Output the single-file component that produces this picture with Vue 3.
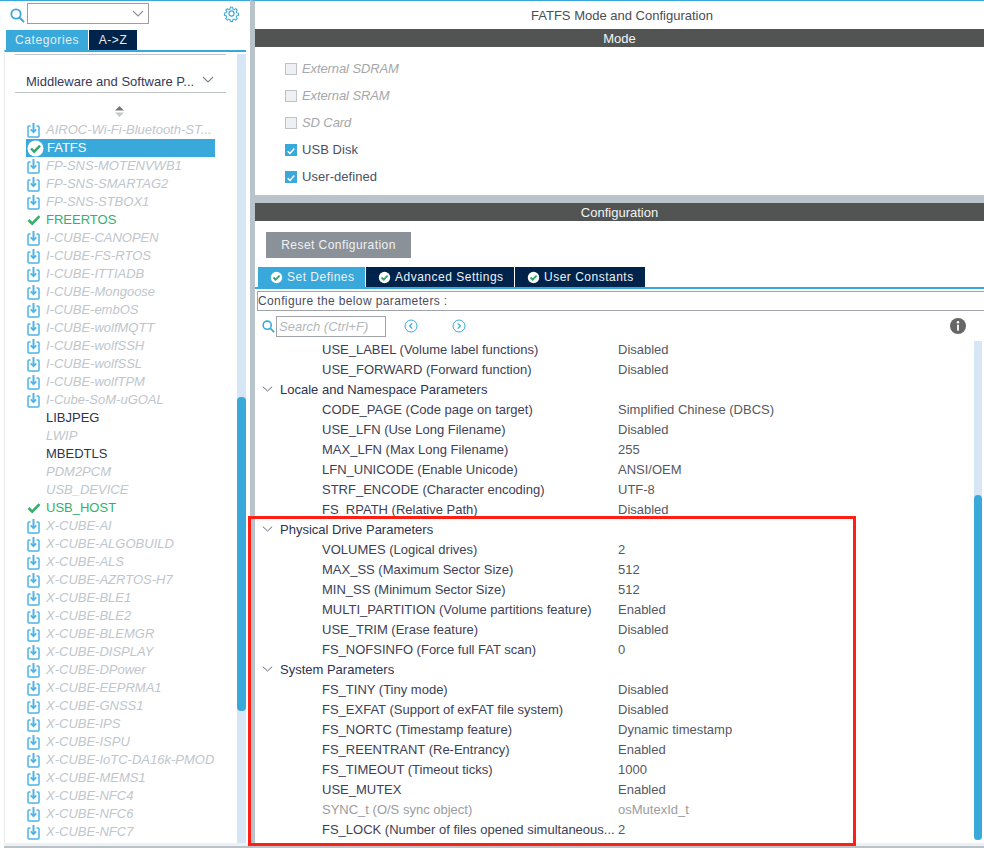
<script setup>
const dl = 'dl', ok = 'ok', sel = 'sel', on = 'on', off = 'off'
const mw = [
  ['AIROC-Wi-Fi-Bluetooth-ST...', dl], ['FATFS', sel], ['FP-SNS-MOTENVWB1', dl], ['FP-SNS-SMARTAG2', dl],
  ['FP-SNS-STBOX1', dl], ['FREERTOS', ok], ['I-CUBE-CANOPEN', dl], ['I-CUBE-FS-RTOS', dl], ['I-CUBE-ITTIADB', dl],
  ['I-CUBE-Mongoose', dl], ['I-CUBE-embOS', dl], ['I-CUBE-wolfMQTT', dl], ['I-CUBE-wolfSSH', dl], ['I-CUBE-wolfSSL', dl],
  ['I-CUBE-wolfTPM', dl], ['I-Cube-SoM-uGOAL', dl], ['LIBJPEG', on], ['LWIP', off], ['MBEDTLS', on], ['PDM2PCM', off],
  ['USB_DEVICE', off], ['USB_HOST', ok], ['X-CUBE-AI', dl], ['X-CUBE-ALGOBUILD', dl], ['X-CUBE-ALS', dl],
  ['X-CUBE-AZRTOS-H7', dl], ['X-CUBE-BLE1', dl], ['X-CUBE-BLE2', dl], ['X-CUBE-BLEMGR', dl], ['X-CUBE-DISPLAY', dl],
  ['X-CUBE-DPower', dl], ['X-CUBE-EEPRMA1', dl], ['X-CUBE-GNSS1', dl], ['X-CUBE-IPS', dl], ['X-CUBE-ISPU', dl],
  ['X-CUBE-IoTC-DA16k-PMOD', dl], ['X-CUBE-MEMS1', dl], ['X-CUBE-NFC4', dl], ['X-CUBE-NFC6', dl], ['X-CUBE-NFC7', dl], ['', dl]
]
const modes = [
  ['External SDRAM', false], ['External SRAM', false], ['SD Card', false], ['USB Disk', true], ['User-defined', true]
]
const params = [
  ['USE_LABEL (Volume label functions)', 'Disabled'], ['USE_FORWARD (Forward function)', 'Disabled'],
  ['Locale and Namespace Parameters'],
  ['CODE_PAGE (Code page on target)', 'Simplified Chinese (DBCS)'], ['USE_LFN (Use Long Filename)', 'Disabled'],
  ['MAX_LFN (Max Long Filename)', '255'], ['LFN_UNICODE (Enable Unicode)', 'ANSI/OEM'],
  ['STRF_ENCODE (Character encoding)', 'UTF-8'], ['FS_RPATH (Relative Path)', 'Disabled'],
  ['Physical Drive Parameters'],
  ['VOLUMES (Logical drives)', '2'], ['MAX_SS (Maximum Sector Size)', '512'], ['MIN_SS (Minimum Sector Size)', '512'],
  ['MULTI_PARTITION (Volume partitions feature)', 'Enabled'], ['USE_TRIM (Erase feature)', 'Disabled'],
  ['FS_NOFSINFO (Force full FAT scan)', '0'],
  ['System Parameters'],
  ['FS_TINY (Tiny mode)', 'Disabled'], ['FS_EXFAT (Support of exFAT file system)', 'Disabled'],
  ['FS_NORTC (Timestamp feature)', 'Dynamic timestamp'], ['FS_REENTRANT (Re-Entrancy)', 'Enabled'],
  ['FS_TIMEOUT (Timeout ticks)', '1000'], ['USE_MUTEX', 'Enabled'],
  ['SYNC_t (O/S sync object)', 'osMutexId_t', true],
  ['FS_LOCK (Number of files opened simultaneous...', '2']
]
const tabs = ['Set Defines', 'Advanced Settings', 'User Constants']
</script>

<template>
  <div class="app">
    <aside class="left">
      <div class="search-row">
        <svg class="lens" width="15" height="15" viewBox="0 0 15 15"><circle cx="6" cy="6" r="4.7" fill="none" stroke="#39a9dc" stroke-width="1.8"/><path d="M9.6 9.6L14 14" stroke="#39a9dc" stroke-width="2"/></svg>
        <div class="combo"><svg width="12" height="7" viewBox="0 0 12 7"><path d="M1 1l5 5 5-5" fill="none" stroke="#8a9299" stroke-width="1.1"/></svg></div>
        <svg class="gear" width="17" height="17" viewBox="0 0 24 24" fill="none" stroke="#39a9dc" stroke-width="1.7"><circle cx="12" cy="12" r="3.6"/><path d="M10.2 1.6h3.6l.6 3 2 .9 2.6-1.7 2.5 2.6-1.7 2.5.9 2.1 3 .6v3.6l-3 .6-.9 2 1.7 2.6-2.6 2.5-2.5-1.7-2.1.9-.6 3h-3.6l-.6-3-2-.9-2.6 1.7-2.5-2.6 1.7-2.5-.9-2.1-3-.6v-3.600l3-.6.9-2-1.700-2.600 2.600-2.500 2.500 1.700 2.100-.9z" transform="translate(1.800 1.800) scale(.85)"/></svg>
      </div>
      <div class="ltabs"><span class="ltab active">Categories</span><span class="ltab">A-&gt;Z</span></div>
      <div class="lbody">
        <div class="lcontent">
          <div class="dropdown"><span>Middleware and Software P...</span><svg width="12" height="7" viewBox="0 0 12 7"><path d="M1 1l5 5 5-5" fill="none" stroke="#7d868d" stroke-width="1.1"/></svg></div>
          <div class="sorter"><svg width="9" height="11" viewBox="0 0 9 11"><path d="M4.500 0L9 4.500H0z" fill="#777"/><path d="M4.500 11L0 6.500h9z" fill="#c4c8cb"/></svg></div>
          <div class="list">
            <div v-for="(it, i) in mw" :key="i" class="item" :class="it[1]">
              <span class="ico">
                <svg v-if="it[1] === 'dl'" width="13" height="15" viewBox="0 0 13 15" fill="none" stroke="#4fb3e5"><path d="M3.500 3H2Q1 3 1 4v9q0 1 1 1h9q1 0 1-1V4q0-1-1-1H9.500" stroke-width="1.500"/><path d="M6.500 0v8.500" stroke-width="2"/><path d="M3.700 6.300L6.500 9.200l2.800-2.900" stroke-width="1.700"/></svg>
                <svg v-else-if="it[1] === 'ok'" width="14" height="12" viewBox="0 0 14 12"><path d="M1.500 6l3.700 3.700 7.300-7.500" fill="none" stroke="#34b06e" stroke-width="2.600"/></svg>
                <svg v-else-if="it[1] === 'sel'" width="17" height="17" viewBox="0 0 17 17"><circle cx="8.500" cy="8.500" r="8" fill="#fff"/><path d="M4 8.500l3.200 3.200 5.800-6" fill="none" stroke="#34a56b" stroke-width="2.400"/></svg>
              </span>
              <span class="lbl">{{ it[0] }}</span>
            </div>
          </div>
        </div>
        <div class="ltrack"><div class="lthumb"></div></div>
      </div>
      <div class="lfoot"></div>
    </aside>

    <main class="right">
      <div class="title">FATFS Mode and Configuration</div>
      <div class="bar">Mode</div>
      <section class="modes">
        <label v-for="m in modes" :key="m[0]" class="mode" :class="{ checked: m[1] }">
          <span class="box"><svg v-if="m[1]" width="12" height="12" viewBox="0 0 12 12"><path d="M2 6.200l2.800 2.800L10 3" fill="none" stroke="#fff" stroke-width="1.800"/></svg></span>
          {{ m[0] }}
        </label>
      </section>
      <div class="bar cfg">Configuration</div>
      <section class="config">
        <div class="reset-row"><button class="reset">Reset Configuration</button></div>
        <div class="tabs">
          <span v-for="(t, i) in tabs" :key="t" class="tab" :class="{ active: i === 0 }">
            <svg width="13" height="13" viewBox="0 0 13 13"><circle cx="6.500" cy="6.500" r="5.700" fill="#fff"/><path d="M3.500 6.500l2.200 2.200 3.900-4" fill="none" stroke="#34a56b" stroke-width="1.800"/></svg>
            {{ t }}
          </span>
        </div>
        <div class="desc">Configure the below parameters :</div>
        <div class="tools">
          <svg class="slens" width="13" height="13" viewBox="0 0 15 15"><circle cx="6" cy="6" r="4.700" fill="none" stroke="#39a9dc" stroke-width="1.800"/><path d="M9.600 9.600L14 14" stroke="#39a9dc" stroke-width="2"/></svg>
          <div class="sbox">Search (Ctrl+F)</div>
          <svg class="nav first" width="14" height="14" viewBox="0 0 14 14" fill="none" stroke="#39a9dc"><circle cx="7" cy="7" r="6"/><path d="M8.300 4.300L5.600 7l2.700 2.700" stroke-width="1.200"/></svg>
          <svg class="nav" width="14" height="14" viewBox="0 0 14 14" fill="none" stroke="#39a9dc"><circle cx="7" cy="7" r="6"/><path d="M5.700 4.300L8.400 7l-2.700 2.700" stroke-width="1.200"/></svg>
          <svg class="info" width="16" height="16" viewBox="0 0 16 16"><circle cx="8" cy="8" r="8" fill="#666"/><circle cx="8" cy="4.200" r="1.200" fill="#fff"/><rect x="7.100" y="6.700" width="1.800" height="6" fill="#fff"/></svg>
        </div>
        <div class="tablewrap">
          <div class="table">
            <div v-for="p in params" :key="p[0]" class="row" :class="{ group: p.length === 1, dim: p[2] }">
              <template v-if="p.length === 1">
                <svg width="11" height="6" viewBox="0 0 11 6"><path d="M.8.600L5.500 5 10.200.600" fill="none" stroke="#667" stroke-width="1"/></svg>
                <span>{{ p[0] }}</span>
              </template>
              <template v-else>
                <span class="pname">{{ p[0] }}</span><span class="pval">{{ p[1] }}</span>
              </template>
            </div>
          </div>
          <div class="rtrack"><div class="rthumb"></div></div>
        </div>
      </section>
      <div class="rfoot"></div>
    </main>
    <div class="callout"></div>
  </div>
</template>

<style>
html, body { margin: 0; background: #fff; }
</style>

<style scoped>
.app { position: relative; width: 984px; height: 848px; display: flex; overflow: hidden; font-family: "Liberation Sans", Arial, sans-serif; font-size: 13px; color: #3a3f56; background: #fff; }
.left { width: 250px; flex: none; display: flex; flex-direction: column; }
.search-row { height: 30px; display: flex; align-items: flex-start; box-sizing: border-box; padding-left: 10px; border-top: 1px solid #39a9dc; }
.lens { margin-top: 7px; }
.combo { width: 116px; height: 19px; margin: 2px 0 0 2px; border: 1px solid #9a9fa3; display: flex; align-items: center; justify-content: flex-end; padding-right: 4px; }
.gear { margin: 4px 0 0 74px; }
.ltabs { display: flex; height: 20px; padding-left: 6px; gap: 1px; }
.ltab { width: 48px; background: #00234b; color: #e8edf2; text-align: center; line-height: 20px; font-size: 12px; letter-spacing: .6px; }
.ltab.active { width: 82px; background: #39a9dc; }
.lbody { flex: 1; min-height: 0; margin-left: 4px; width: 242px; border-top: 2px solid #39a9dc; display: flex; box-sizing: border-box; border-left: 1px solid #e9ecef; padding-left: 1px; overflow: hidden; }
.lcontent { width: 230px; flex: none; overflow: hidden; }
.dropdown { margin: 2px 10px 0 9px; height: 37px; box-sizing: content-box; border-top: 1px solid #c0c4c8; border-bottom: 1px solid #c0c4c8; display: flex; align-items: flex-end; padding-left: 11px; color: #35395a; white-space: nowrap; line-height: 15px; }
.dropdown span { margin-bottom: 3px; }
.dropdown svg { margin: 0 0 9px 8px; }
.sorter { height: 28px; box-sizing: border-box; padding: 0 0 4px 109px; display: flex; align-items: flex-end; }
.list { margin: 0 21px 0 20px; }
.item { height: 18px; line-height: 18px; display: flex; align-items: center; font-style: italic; color: #c0c6cc; white-space: nowrap; }
.ico { width: 20px; flex: none; display: flex; align-items: center; height: 18px; padding-left: 1px; box-sizing: border-box; }
.item.ok { color: #34b06e; font-style: normal; }
.item.sel { background: #39a9dc; color: #fff; font-style: normal; }
.item.sel .lbl { margin-left: 1px; }
.item.on { color: #2e3350; font-style: normal; }
.ltrack { width: 9px; background: #d7e6f4; margin-left: 1px; position: relative; margin-top: 2px; }
.lthumb { position: absolute; left: 0; right: 0; top: 343px; height: 314px; background: #39a9dc; border-radius: 4px; }
.lfoot { margin-left: 4px; height: 5px; border-top: 3px solid #eef0f3; background: #b8c4ca; box-sizing: border-box; }

.right { flex: 1; min-width: 0; border-left: 5px solid #b8c4ca; display: flex; flex-direction: column; background: #b8c4ca; border-top: 1px solid #39a9dc; box-sizing: border-box; }
.title { height: 28px; line-height: 29px; text-align: center; background: #fff; font-size: 13px; color: #4a4d55; padding-left: 5px; }
.bar { height: 18px; line-height: 19px; background: #525453; color: #f4f4f4; text-align: center; font-size: 13px; }
.modes { height: 148px; background: #fff; box-sizing: border-box; padding: 8px 0 0 30px; }
.mode { height: 27px; display: flex; align-items: center; gap: 5px; font-size: 13px; font-style: italic; color: #a5a7aa; letter-spacing: -.1px; }
.mode.checked { font-style: normal; color: #4d5165; letter-spacing: .05px; }
.box { width: 10px; height: 10px; border: 1px solid #bfc3c6; background: #eef0f3; display: flex; }
.mode.checked .box { background: #39a9dc; border-color: #39a9dc; }
.cfg { margin-top: 8px; }
.config { flex: 1; min-height: 0; background: #fff; display: flex; flex-direction: column; }
.reset-row { height: 46px; padding: 11px 0 0 11px; box-sizing: border-box; }
.reset { width: 145px; height: 26px; border: 0; background: #8a9199; color: #f0f1f2; font: 12px "Liberation Sans", Arial, sans-serif; letter-spacing: .45px; padding: 0; display: block; }
.tabs { display: flex; padding-left: 3px; gap: 1px; height: 20px; border-bottom: 2px solid #39a9dc; }
.tab { background: #00234b; color: #eef2f5; font-size: 12px; letter-spacing: .5px; display: flex; align-items: center; padding-left: 12px; box-sizing: border-box; gap: 4px; }
.tab:nth-child(1) { width: 107px; background: #39a9dc; }
.tab:nth-child(2) { width: 148px; }
.tab:nth-child(3) { width: 130px; }
.desc { height: 20px; margin: 2px 0 0 2px; box-sizing: border-box; border: 1px solid #a0a4a8; border-right: 0; line-height: 18px; font-size: 12px; color: #4a4d60; letter-spacing: .38px; }
.tools { height: 30px; display: flex; align-items: center; padding-left: 7px; box-sizing: border-box; }
.slens { flex: none; }
.sbox { width: 110px; height: 21px; box-sizing: border-box; border: 1px solid #a0a4a8; font-size: 13px; font-style: italic; color: #b3b7bb; line-height: 19px; padding-left: 2px; margin-left: 1px; }
.nav { margin-left: 34px; }
.nav.first { margin-left: 18px; }
.info { margin-left: 484px; }
.tablewrap { flex: 1; min-height: 0; display: flex; overflow: hidden; margin-top: -2px; }
.table { width: 719px; flex: none; }
.row { height: 20px; display: flex; align-items: center; padding-left: 67px; font-size: 13px; color: #3d4156; white-space: nowrap; }
.row.group { padding-left: 7px; color: #2e3350; gap: 7px; }
.row.dim { color: #9a9ca0; }
.pname { width: 296px; flex: none; overflow: hidden; }
.pval { color: #55585f; }
.row.dim .pval { color: #9a9ca0; }
.rtrack { width: 8px; background: #d7e6f4; position: relative; height: 499px; margin-top: 2px; }
.rthumb { position: absolute; left: 0; right: 0; top: 154px; bottom: 0; background: #39a9dc; border-radius: 4px; }
.rfoot { height: 5px; border-top: 3px solid #eef0f3; background: #b8c4ca; box-sizing: border-box; }
.callout { position: absolute; left: 248px; top: 516px; width: 608px; height: 330px; border: 3px solid #ff1f14; box-sizing: border-box; pointer-events: none; }
</style>
